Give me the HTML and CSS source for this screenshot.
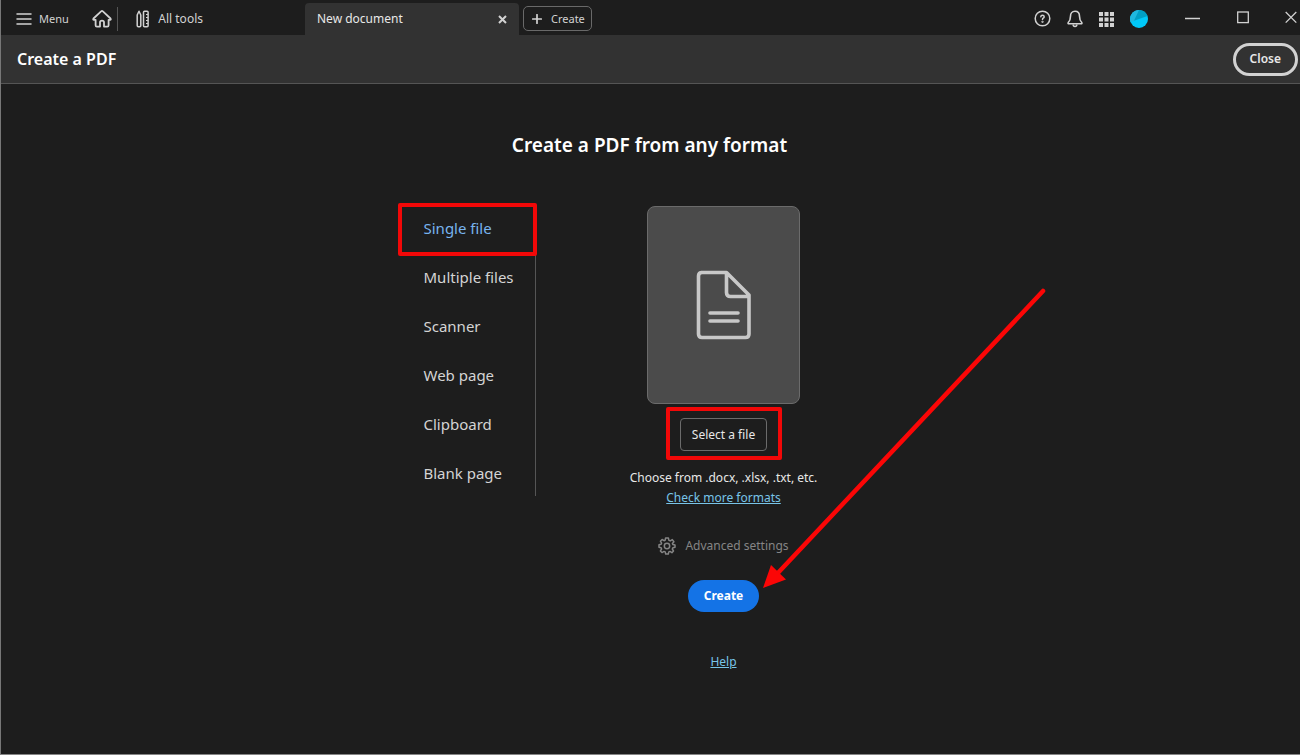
FILE: index.html
```html
<!DOCTYPE html>
<html lang="en">
<head>
<meta charset="utf-8">
<title>Create a PDF</title>
<link rel="stylesheet" href="styles.css">
</head>
<body>
<div class="window">
  <header class="titlebar">
    <div class="titlebar-start">
      <button class="bar-button menu-button" type="button">
        <svg width="16" height="14" viewBox="0 0 16 14" fill="none" stroke="currentColor" stroke-width="1.5" stroke-linecap="round"><path d="M1 2h14M1 7h14M1 12h14"/></svg>
        Menu
      </button>
      <button class="bar-button home-button" type="button" aria-label="Home">
        <svg width="20" height="18" viewBox="0 0 20 18" fill="none" stroke="currentColor" stroke-width="1.8" stroke-linejoin="round" stroke-linecap="round"><path d="M3.600 9.800V15.200Q3.600 16.600 4.900 16.600H8V12.300Q8 10.600 10 10.600T12 12.300V16.600H15.200Q16.600 16.600 16.600 15.200V9.800H18Q19.300 9.600 18.500 8.500L10.900 1.400Q10 .7 9.100 1.400L1.500 8.500Q.7 9.600 2 9.800Z"/></svg>
      </button>
      <button class="bar-button tools-button" type="button">
        <svg width="13" height="18" viewBox="0 0 13 18" fill="none" stroke="currentColor" stroke-width="1.5" stroke-linejoin="round"><path d="M1.200 5L3 1.200 4.800 5V15.500Q4.800 16.700 3.600 16.700H2.400Q1.200 16.700 1.200 15.500Z"/><rect x="7.500" y="1.200" width="4.600" height="15.500" rx="1"/><path d="M12 4.500H10M12 7.500H10M12 10.500H10M12 13.500H10" stroke-width="1.200"/></svg>
        All tools
      </button>
    </div>
    <div class="tabs">
      <div class="tab">
        <span>New document</span>
        <button class="bar-button tab-close" type="button" aria-label="Close tab">
          <svg width="9" height="9" viewBox="0 0 9 9" fill="none" stroke="currentColor" stroke-width="2"><path d="M1 1l7 7M8 1L1 8"/></svg>
        </button>
      </div>
      <button class="new-button" type="button">
        <svg width="10" height="10" viewBox="0 0 10 10" fill="none" stroke="currentColor" stroke-width="1.700" stroke-linecap="round"><path d="M5 .7v8.600M.7 5h8.600"/></svg>
        Create
      </button>
    </div>
    <div class="titlebar-end">
      <button class="bar-button" type="button" aria-label="Help">
        <svg width="17" height="17" viewBox="0 0 17 17" fill="none" stroke="currentColor" stroke-width="1.500" stroke-linecap="round"><circle cx="8.500" cy="8.500" r="7.300"/><path d="M6.800 6.700Q6.900 5.200 8.500 5.200T10.200 6.700Q10.200 7.600 9.200 8.200Q8.500 8.700 8.500 9.500"/><circle cx="8.500" cy="11.800" r=".4"/></svg>
      </button>
      <button class="bar-button" type="button" aria-label="Notifications">
        <svg width="16" height="18" viewBox="0 0 16 18" fill="none" stroke="currentColor" stroke-width="1.600" stroke-linejoin="round"><path d="M8 1.200C5 1.200 3.500 3.400 3.500 6.200C3.500 10 2.600 11.200 1.200 12.500Q.7 13.800 2 13.800H14Q15.300 13.800 14.800 12.500C13.400 11.200 12.500 10 12.500 6.200C12.500 3.400 11 1.200 8 1.200Z"/><path d="M6.200 14.500Q6.200 16.500 8 16.500T9.800 14.500"/></svg>
      </button>
      <button class="bar-button" type="button" aria-label="Apps">
        <svg width="15" height="16" viewBox="0 0 15 16" fill="currentColor"><path d="M0 1h4v4H0zM5.500 1h4v4h-4zM11 1h4v4h-4zM0 6.500h4v4H0zM5.500 6.500h4v4h-4zM11 6.500h4v4h-4zM0 12h4v4H0zM5.500 12h4v4h-4zM11 12h4v4h-4z"/></svg>
      </button>
      <button class="bar-button" type="button" aria-label="Account">
        <svg width="18" height="18" viewBox="0 0 18 18"><circle cx="9" cy="9" r="9" fill="#00c8f8"/><path d="M9 0A9 9 0 0 0 .6 12.200L9 8.500Z" fill="#1fb8de"/><path d="M9 0A9 9 0 0 1 17.500 6L4 10.700Z" fill="#009fc4"/></svg>
      </button>
      <div class="window-controls">
        <button class="bar-button" type="button" aria-label="Minimize">
          <svg width="16" height="14" viewBox="0 0 16 14" stroke="currentColor" stroke-width="1.500"><path d="M0 7.500h15"/></svg>
        </button>
        <button class="bar-button" type="button" aria-label="Maximize">
          <svg width="12" height="14" viewBox="0 0 12 14" fill="none" stroke="currentColor" stroke-width="1.300"><rect x=".7" y="1" width="10.600" height="10.600"/></svg>
        </button>
        <button class="bar-button" type="button" aria-label="Close window">
          <svg width="12" height="14" viewBox="0 0 12 14" stroke="currentColor" stroke-width="1.300"><path d="M.7 1l10.600 10.600M11.300 1L.7 11.600"/></svg>
        </button>
      </div>
    </div>
  </header>

  <div class="toolbar">
    <h1 class="toolbar-title">Create a PDF</h1>
    <button class="close-button" type="button">Close</button>
  </div>

  <main class="content">
    <h2 class="heading">Create a PDF from any format</h2>
    <div class="layout">
      <nav class="sources" aria-label="Source">
        <a class="source source-active" href="#single">Single file<span class="mark mark-source"></span></a>
        <a class="source" href="#multiple">Multiple files</a>
        <a class="source" href="#scanner">Scanner</a>
        <a class="source" href="#web">Web page</a>
        <a class="source" href="#clipboard">Clipboard</a>
        <a class="source" href="#blank">Blank page</a>
      </nav>
      <section class="panel">
        <div class="preview">
          <svg width="56" height="70" viewBox="0 0 56 70" fill="none" stroke="currentColor" stroke-width="3.600" stroke-linejoin="round" stroke-linecap="round"><path d="M5 2.500H30.500L53 25V64Q53 67.500 49.500 67.500H6Q2.500 67.500 2.500 64V6Q2.500 2.500 6 2.500ZM30.500 3V22.500Q30.500 26.500 34.500 26.500H52.500M14 43H42M14 51H42"/></svg>
        </div>
        <div class="select-wrap">
          <button class="select-button" type="button">Select a file</button>
          <span class="mark mark-select"></span>
        </div>
        <p class="hint">Choose from .docx, .xlsx, .txt, etc.</p>
        <a class="link" href="#formats">Check more formats</a>
        <button class="advanced" type="button" disabled>
          <svg width="18" height="18" viewBox="0 0 18 18" fill="none" stroke="currentColor" stroke-width="1.500" stroke-linejoin="round"><path d="M7.600 1H10.400L10.900 3.400L12.200 3.900L14.300 2.600L15.900 4.700L14.400 6.500L14.900 7.600L17 8V10.300L14.900 10.800L14.300 12L15.500 14L13.900 15.700L12 14.400L10.800 14.900L10.300 17H7.700L7.200 14.900L6 14.400L4 15.600L2.400 13.900L3.600 12L3.100 10.800L1 10.300V7.800L3.100 7.300L3.600 6.100L2.400 4.200L4.100 2.500L6 3.700L7.200 3.200Z"/><circle cx="9" cy="9" r="2.700"/></svg>
          Advanced settings
        </button>
        <div class="create-wrap">
          <button class="create-button" type="button">Create</button>
          <svg class="arrow" width="288" height="304" viewBox="0 0 288 304"><path d="M281 7L14 291" stroke="#fb0606" stroke-width="4.500" stroke-linecap="round"/><path d="M1 304L9 281L24 295.500Z" fill="#fb0606"/></svg>
        </div>
        <a class="link" href="#help">Help</a>
      </section>
    </div>
  </main>
</div>
</body>
</html>
```

FILE: styles.css
```css
* {
  box-sizing: border-box;
}

body {
  margin: 0;
  background: #1d1d1d;
  color: #e8e8e8;
  font-family: "Noto Sans", "Open Sans", sans-serif;
  font-size: 12px;
  line-height: 20px;
}

button {
  margin: 0;
  font: inherit;
  color: inherit;
}

svg {
  display: block;
  flex: none;
}

.window {
  display: flex;
  flex-direction: column;
  min-height: 100vh;
  border-left: 1px solid #777;
  border-bottom: 1px solid #858585;
  overflow: hidden;
}

.titlebar {
  display: flex;
  height: 35px;
  background: #1d1d1d;
}

.bar-button {
  display: flex;
  align-items: center;
  padding: 0;
  border: 0;
  background: none;
  color: #d2d2d2;
}

.titlebar-start {
  display: flex;
  align-items: center;
  width: 304px;
  padding: 3px 0 0 15px;
}

.menu-button {
  gap: 7px;
  font-size: 11px;
}

.home-button {
  margin-left: auto;
  padding-right: 5px;
  height: 24px;
  border-right: 1px solid #555;
}

.tools-button {
  gap: 9px;
  margin-left: 18px;
  margin-right: 102px;
}

.tabs {
  display: flex;
  flex: 1;
  gap: 4px;
  padding-top: 3px;
}

.tab {
  display: flex;
  align-items: center;
  justify-content: space-between;
  width: 214px;
  padding: 0 12px;
  border-radius: 4px 4px 0 0;
  background: #323232;
}

.new-button {
  display: flex;
  align-items: center;
  gap: 9px;
  height: 25px;
  margin-top: 3px;
  padding: 0 6px 0 8px;
  border: 1px solid #696969;
  border-radius: 5px;
  background: none;
  color: #d2d2d2;
  font-size: 11px;
}

.titlebar-end {
  display: flex;
  align-items: center;
  gap: 16px;
  padding: 2px 3px 0 0;
}

.window-controls {
  display: flex;
  gap: 36px;
  margin-left: 21px;
  padding-bottom: 2px;
}

.toolbar {
  display: flex;
  align-items: center;
  justify-content: space-between;
  height: 49px;
  padding: 0 2px 0 16px;
  border-bottom: 1px solid #555;
  background: #323232;
}

.toolbar-title {
  margin: 0;
  color: #fff;
  font-size: 16px;
  font-weight: 600;
}

.close-button {
  height: 33px;
  padding: 0 14px;
  border: 3px solid #d2d2d2;
  border-radius: 17px;
  background: none;
  font-weight: 600;
}

.content {
  display: flex;
  flex-direction: column;
  align-items: center;
  padding: 46px 2px 0 0;
}

.heading {
  margin: 0 0 46px;
  color: #fff;
  font-size: 19px;
  font-weight: 600;
  line-height: 30px;
}

.layout {
  display: flex;
  align-items: flex-start;
}

.sources {
  display: flex;
  flex-direction: column;
  gap: 4px;
  width: 148px;
  border-right: 1px solid #555;
}

.source {
  position: relative;
  padding-left: 36px;
  color: #d4d4d4;
  font-size: 15px;
  line-height: 45px;
  text-decoration: none;
}

.source-active {
  color: #78b4ee;
}

.mark {
  position: absolute;
  border: 4px solid #f20808;
  border-radius: 2px;
  pointer-events: none;
}

.mark-source {
  inset: -3px -2px -5px 10px;
}

.panel {
  display: flex;
  flex-direction: column;
  align-items: center;
  width: 376px;
}

.preview {
  display: grid;
  place-items: center;
  width: 153px;
  height: 198px;
  border: 1px solid #6b6b6b;
  border-radius: 8px;
  background: #4b4b4b;
  color: #c8c8c8;
}

.select-wrap,
.create-wrap {
  position: relative;
}

.select-wrap {
  margin: 14px 0 17px;
}

.mark-select {
  inset: -11px -15px -9px -14px;
}

.select-button {
  display: block;
  height: 33px;
  padding: 0 11px;
  border: 1px solid #6b6b6b;
  border-radius: 4px;
  background: none;
}

.hint {
  margin: 0;
}

.link {
  color: #78c4e8;
}

.advanced {
  display: flex;
  align-items: center;
  gap: 9px;
  margin: 28px 0 24px;
  padding: 0;
  border: 0;
  background: none;
  color: #858585;
}

.create-wrap {
  margin-bottom: 40px;
}

.create-button {
  display: block;
  height: 32px;
  padding: 0 16px;
  border: 0;
  border-radius: 16px;
  background: #1473e6;
  color: #fff;
  font-weight: 700;
}

.arrow {
  position: absolute;
  left: 100%;
  bottom: 24px;
  margin-left: 3px;
  pointer-events: none;
}
```
